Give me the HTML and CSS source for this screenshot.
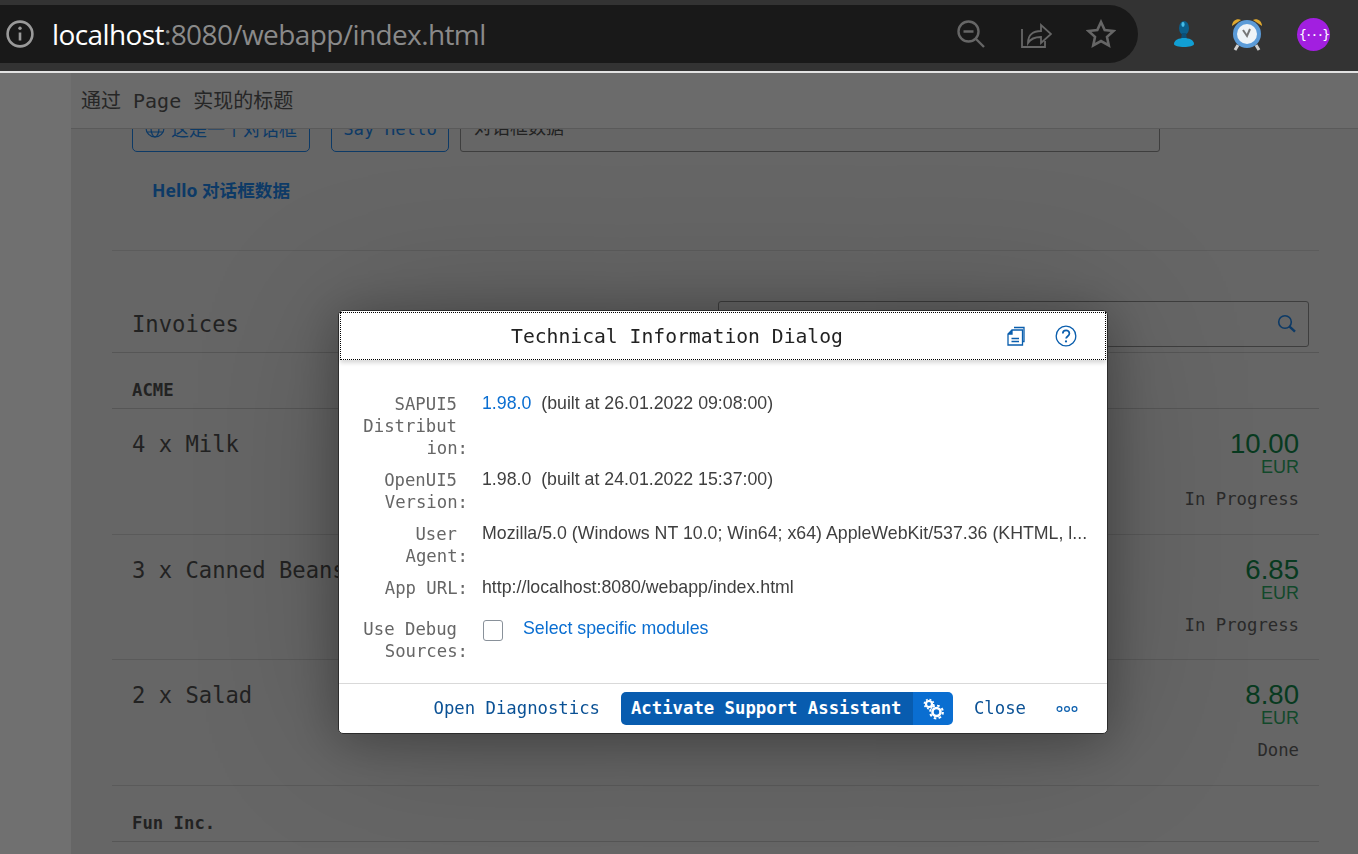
FILE: index.html
```html
<!DOCTYPE html>
<html lang="en">
<head>
  <meta charset="UTF-8">
  <title>Technical Information Dialog</title>
  <link rel="stylesheet" href="styles.css">
</head>
<body>
  <!-- Browser toolbar -->
  <div class="browser-bar">
    <div class="address">
      <svg class="site-info" width="30" height="30" viewBox="0 0 30 30" fill="none" stroke="#9a9a9a" stroke-width="2.6">
        <circle cx="15" cy="15" r="12.4"/>
        <path d="M15 13.5v8"/>
        <circle cx="15" cy="9.3" r="1.7" fill="#9a9a9a" stroke="none"/>
      </svg>
      <div class="url"><span class="host">localhost</span>:8080/webapp/index.html</div>
      <svg class="addr-icon" width="30" height="30" viewBox="0 0 30 30" fill="none" stroke="#666" stroke-width="2.4">
        <circle cx="12.5" cy="12.5" r="10"/>
        <path d="M7.5 12.5h10M20 20l8 8"/>
      </svg>
      <svg class="addr-icon" width="32" height="30" viewBox="0 0 32 30" fill="none" stroke="#666" stroke-width="1.8">
        <path d="M2 10v18h23v-6"/>
        <path d="M8 24c0-8 5-12 13-12V6l10 9-10 9v-6c-6 0-10 1-13 6z"/>
      </svg>
      <svg class="addr-icon addr-last" width="30" height="30" viewBox="0 0 30 30" fill="none" stroke="#666" stroke-width="2.6">
        <path d="M15 3l3.7 8 8.8 1-6.5 5.9 1.8 8.6-7.8-4.4-7.8 4.4 1.8-8.6L2.5 12l8.8-1z"/>
      </svg>
    </div>
    <div class="extensions">
      <svg width="24" height="30" viewBox="0 0 24 30">
        <ellipse cx="12" cy="9" rx="5" ry="7" fill="#0b5f8c"/>
        <path d="M10 14h4l1 6H9z" fill="#0a4f78"/>
        <path d="M2 25c0-4 5-6 10-6s10 2 10 6-20 4-20 0z" fill="#119fd4"/>
        <ellipse cx="11" cy="5.5" rx="1.6" ry="2.4" fill="#45bde8"/>
      </svg>
      <svg width="34" height="36" viewBox="0 0 34 36">
        <path d="M2 10c0-5 5-8 9-6z" fill="#e0a92f"/>
        <path d="M32 10c0-5-5-8-9-6z" fill="#e0a92f"/>
        <path d="M8 29l-3 5M26 29l3 5" stroke="#cfcfcf" stroke-width="3"/>
        <circle cx="17" cy="18" r="14" fill="#5b9bd8"/>
        <circle cx="17" cy="18" r="10" fill="#eef3f7"/>
        <path d="M13 14l4 6 3-7" fill="none" stroke="#777" stroke-width="2"/>
      </svg>
      <div class="ext-purple"><span>{···}</span></div>
    </div>
  </div>

  <div class="app">
    <header class="page-title">通过 Page 实现的标题</header>
    <main class="scroll">
      <div class="panel">
        <div class="toolbar">
          <button class="ghost-btn btn-dialog">
            <svg width="20" height="20" viewBox="0 0 20 20" fill="none" stroke="#0d3a66" stroke-width="1.2">
              <circle cx="10" cy="10" r="9"/>
              <ellipse cx="10" cy="10" rx="4" ry="9"/>
              <path d="M1 10h18M2.5 6h15M2.5 14h15"/>
            </svg>
            这是一个对话框
          </button>
          <button class="ghost-btn btn-hello">Say Hello</button>
          <div class="text-input">对话框数据</div>
        </div>
        <div class="hello-text">Hello 对话框数据</div>
      </div>

      <section class="invoices">
        <div class="list-head">
          <h2>Invoices</h2>
          <div class="search">
            <svg width="20" height="20" viewBox="0 0 20 20" fill="none" stroke="#0d3a66" stroke-width="1.6">
              <circle cx="8" cy="8" r="6.3"/>
              <path d="M12.6 12.6l5.4 5" stroke-width="2.4"/>
            </svg>
          </div>
        </div>
        <div class="group">ACME</div>
        <div class="item">
          <div class="item-name">4 x Milk</div>
          <div class="item-side">
            <div class="amount">10.00</div>
            <div class="currency">EUR</div>
            <div class="status">In Progress</div>
          </div>
        </div>
        <div class="item">
          <div class="item-name">3 x Canned Beans</div>
          <div class="item-side">
            <div class="amount">6.85</div>
            <div class="currency">EUR</div>
            <div class="status">In Progress</div>
          </div>
        </div>
        <div class="item">
          <div class="item-name">2 x Salad</div>
          <div class="item-side">
            <div class="amount">8.80</div>
            <div class="currency">EUR</div>
            <div class="status">Done</div>
          </div>
        </div>
        <div class="group">Fun Inc.</div>
      </section>
    </main>
  </div>

  <!-- Dialog lies over the page -->
  <div class="dialog">
    <div class="dialog-head">
      <div class="dialog-title">Technical Information Dialog</div>
      <div class="head-icons">
        <svg width="20" height="20" viewBox="0 0 20 20" fill="none" stroke="#0a5ead" stroke-width="1.3">
          <path d="M8 1.5h10v14h-1.6"/>
          <path d="M6 4h10.5v15H2V8z"/>
          <path d="M6 4v4H2" fill="#0a5ead"/>
          <path d="M5.5 12.5h7.5M5.5 15.5h7.5"/>
        </svg>
        <svg width="22" height="22" viewBox="0 0 22 22" fill="none" stroke="#0a5ead" stroke-width="1.3">
          <circle cx="11" cy="11" r="9.8"/>
          <path d="M7.8 8.6c0-4.2 6.6-4.2 6.6 0 0 2.6-3.3 2.6-3.3 5" stroke-width="1.7"/>
          <circle cx="11" cy="16.4" r="1.1" fill="#0a5ead" stroke="none"/>
        </svg>
      </div>
    </div>
    <div class="dialog-body">
      <div class="info-row">
        <div class="info-label">SAPUI5 Distribution<span class="colon">:</span></div>
        <div class="info-value"><span class="link">1.98.0</span>&nbsp; (built at 26.01.2022 09:08:00)</div>
      </div>
      <div class="info-row">
        <div class="info-label">OpenUI5 Version<span class="colon">:</span></div>
        <div class="info-value">1.98.0&nbsp; (built at 24.01.2022 15:37:00)</div>
      </div>
      <div class="info-row">
        <div class="info-label">User Agent<span class="colon">:</span></div>
        <div class="info-value">Mozilla/5.0 (Windows NT 10.0; Win64; x64) AppleWebKit/537.36 (KHTML, l...</div>
      </div>
      <div class="info-row">
        <div class="info-label">App URL<span class="colon">:</span></div>
        <div class="info-value">http://localhost:8080/webapp/index.html</div>
      </div>
      <div class="info-row debug-row">
        <div class="info-label">Use Debug Sources<span class="colon">:</span></div>
        <div class="info-value debug-value">
          <span class="checkbox"></span>
          <span class="link">Select specific modules</span>
        </div>
      </div>
    </div>
    <div class="dialog-foot">
      <span class="foot-btn">Open Diagnostics</span>
      <div class="split-btn">
        <span class="split-main">Activate Support Assistant</span>
        <span class="split-arrow">
          <svg width="24" height="24" viewBox="0 0 24 24" fill="none" stroke="#fff">
            <circle cx="8" cy="7" r="3" stroke-width="2.2"/>
            <circle cx="8" cy="7" r="4.6" stroke-width="1.6" stroke-dasharray="1.8 1.8"/>
            <circle cx="15.5" cy="15" r="4" stroke-width="2.6"/>
            <circle cx="15.5" cy="15" r="6.4" stroke-width="2" stroke-dasharray="2.6 2.4"/>
          </svg>
        </span>
      </div>
      <span class="foot-btn">Close</span>
      <span class="foot-more">
        <svg width="22" height="8" viewBox="0 0 22 8" fill="none" stroke="#0a5ead" stroke-width="1.2">
          <circle cx="3.5" cy="4" r="2.4"/>
          <circle cx="11" cy="4" r="2.4"/>
          <circle cx="18.5" cy="4" r="2.4"/>
        </svg>
      </span>
    </div>
  </div>
</body>
</html>
```

FILE: styles.css
```css
* {
  box-sizing: border-box;
}

body {
  margin: 0;
  height: 854px;
  overflow: hidden;
  background-color: #707070;
  font-family: "DejaVu Sans Mono", "Noto Sans CJK SC", monospace;
  color: #222;
}

/* Browser toolbar */
.browser-bar {
  display: flex;
  align-items: center;
  height: 73px;
  padding-bottom: 3px;
  background-color: #333;
  border-bottom: 2px solid #e2e2e2;
}

.address {
  display: flex;
  align-items: center;
  width: 1138px;
  height: 58px;
  padding-left: 5px;
  background-color: #191919;
  border-radius: 0 29px 29px 0;
}

.url {
  flex: 1;
  margin-left: 17px;
  font-family: "Open Sans", sans-serif;
  font-size: 28px;
  letter-spacing: -0.6px;
  color: #8a8a8a;
}

.host {
  color: #fff;
}

.addr-icon {
  margin-right: 34px;
}

.addr-last {
  margin-right: 22px;
}

.extensions {
  display: flex;
  align-items: center;
  gap: 34px;
  margin-left: 34px;
}

.ext-purple {
  display: flex;
  align-items: center;
  justify-content: center;
  width: 33px;
  height: 33px;
  margin-left: -1px;
  border-radius: 50%;
  background-color: #a21fe0;
  font-size: 13px;
  color: #fff;
  letter-spacing: -2px;
}

/* Page behind the dialog */
.app {
  margin-left: 71px;
  height: 781px;
  background-color: #666;
  overflow: hidden;
}

.page-title {
  position: relative;
  z-index: 1;
  height: 56px;
  padding: 14px 0 0 10px;
  font-size: 20px;
  line-height: 28px;
  background-color: #6b6b6b;
  border-bottom: 1px solid #5a5a5a;
  color: #262626;
}

.scroll {
  margin-top: -25px;
  padding: 0 39px 0 41px;
}

.panel {
  height: 147px;
  border-bottom: 1px solid #5c5c5c;
}

.toolbar {
  display: flex;
  align-items: center;
  gap: 21px;
  padding-left: 20px;
}

.ghost-btn {
  display: flex;
  align-items: center;
  justify-content: center;
  gap: 6px;
  height: 48px;
  padding: 0;
  background: none;
  border: 1px solid #0d3a66;
  border-radius: 5px;
  font-family: inherit;
  font-size: 17.3px;
  color: #0d3a66;
}

.btn-dialog {
  width: 178px;
  font-size: 18px;
}

.btn-hello {
  width: 118px;
  padding-top: 2px;
}

.text-input {
  width: 700px;
  height: 48px;
  margin-left: -10px;
  padding: 11px 13px;
  border: 1px solid #3e3e3e;
  border-radius: 3px;
  font-size: 18px;
  line-height: 24px;
}

.hello-text {
  margin: 26px 0 0 40px;
  font-family: "Noto Sans", "Noto Sans CJK SC", sans-serif;
  font-size: 17.6px;
  font-weight: bold;
  line-height: 24px;
  color: #0d3a66;
}

.invoices {
  margin-top: 50px;
}

.list-head {
  display: flex;
  justify-content: space-between;
  height: 52px;
  padding: 0 10px 0 20px;
  border-bottom: 1px solid #565656;
}

.list-head h2 {
  margin: 10px 0 0;
  font-size: 22.2px;
  font-weight: normal;
  line-height: 26px;
}

.search {
  display: flex;
  align-items: center;
  justify-content: flex-end;
  width: 591px;
  height: 46px;
  padding-right: 11px;
  border: 1px solid #3e3e3e;
  border-radius: 3px;
}

.group {
  height: 56px;
  padding: 25px 0 0 20px;
  font-size: 17.3px;
  font-weight: bold;
  line-height: 24px;
  border-bottom: 1px solid #565656;
}

.item {
  display: flex;
  justify-content: space-between;
  height: 125.7px;
  padding: 20px 20px 0;
  border-bottom: 1px solid #5a5a5a;
}

.item-name {
  font-size: 22.2px;
  line-height: 30px;
}

.item-side {
  display: flex;
  flex-direction: column;
  align-items: flex-end;
}

.amount {
  font-family: "Liberation Sans", sans-serif;
  font-size: 27.6px;
  line-height: 29px;
  color: #083a20;
}

.currency {
  font-family: "Liberation Sans", sans-serif;
  font-size: 18px;
  line-height: 18px;
  color: #12492b;
}

.status {
  margin-top: 11px;
  font-size: 17.3px;
  line-height: 24px;
  color: #2a2a2a;
}

/* Dialog */
.dialog {
  position: fixed;
  left: 338px;
  top: 310px;
  width: 770px;
  height: 424px;
  display: flex;
  flex-direction: column;
  background-color: #fff;
  border: 1px solid #2c2c2c;
  border-radius: 5px;
  box-shadow: 0 6px 50px rgba(0, 0, 0, 0.3), 0 0 150px rgba(0, 0, 0, 0.2);
}

.dialog-head {
  position: relative;
  display: flex;
  align-items: center;
  justify-content: center;
  flex-shrink: 0;
  height: 48px;
  margin: 1px 1px 0;
  padding-right: 92px;
  border: 1px dotted #000;
  box-shadow: 0 3px 4px rgba(0, 0, 0, 0.15);
}

.dialog-title {
  font-size: 19.7px;
  color: #222;
}

.head-icons {
  position: absolute;
  right: 28px;
  top: 12px;
  display: flex;
  align-items: center;
  gap: 29px;
}

.dialog-body {
  flex: 1;
  padding-top: 33px;
}

.info-row {
  display: flex;
  gap: 25px;
  margin-bottom: 10px;
}

.info-label {
  width: 96px;
  margin-left: 22px;
  flex-shrink: 0;
  overflow-wrap: break-word;
  text-align: right;
  font-size: 17.3px;
  line-height: 22px;
  color: #666;
}

.colon {
  margin-right: -11px;
}

.info-value {
  width: 604px;
  white-space: nowrap;
  font-family: "Liberation Sans", sans-serif;
  font-size: 17.75px;
  line-height: 20px;
  color: #3f3f3f;
}

.link {
  color: #0a6ed1;
}

.debug-row {
  margin-top: 19px;
}

.debug-value {
  display: flex;
  align-items: flex-start;
  gap: 20px;
}

.checkbox {
  display: block;
  width: 20px;
  height: 21px;
  margin: 2px 0 0 1px;
  border: 1px solid #89919a;
  border-radius: 3px;
}

.dialog-foot {
  display: flex;
  align-items: center;
  justify-content: flex-end;
  flex-shrink: 0;
  height: 50px;
  padding-right: 29px;
  border-top: 1px solid #d9d9d9;
  font-size: 17.3px;
}

.foot-btn {
  margin-top: -2px;
  color: #0a5195;
}

.split-btn {
  display: flex;
  height: 33px;
  margin: 0 21px;
  border-radius: 5px;
  overflow: hidden;
  font-weight: bold;
  color: #fff;
}

.split-main {
  display: flex;
  align-items: center;
  width: 292px;
  padding: 0 0 2px 10px;
  background-color: #085caf;
}

.split-arrow {
  display: flex;
  align-items: center;
  justify-content: center;
  width: 40px;
  background-color: #0a6ed1;
}

.foot-more {
  display: flex;
  margin-left: 30px;
}
```
